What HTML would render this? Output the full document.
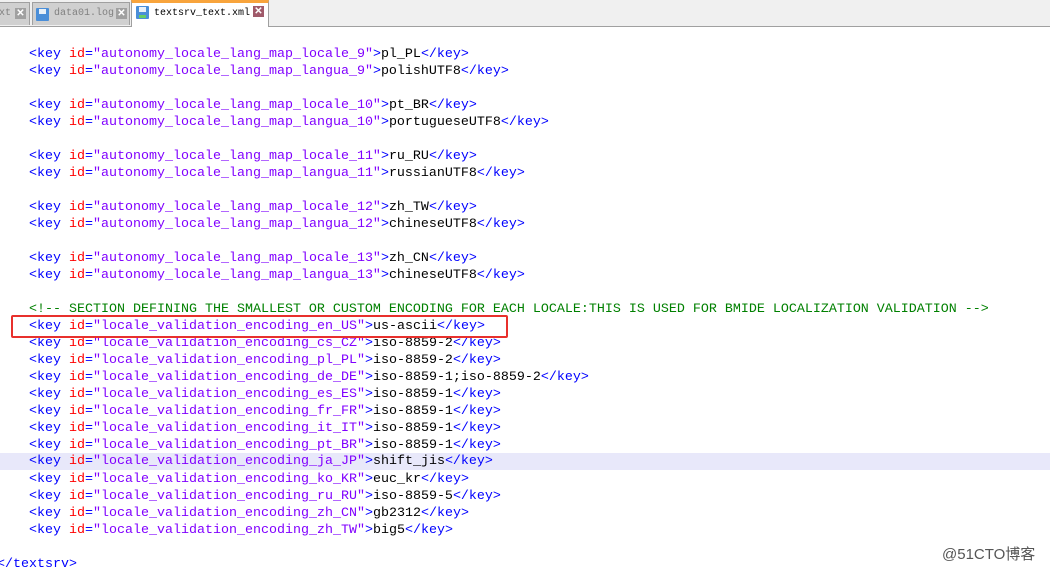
<!DOCTYPE html>
<html><head><meta charset="utf-8"><style>
body{margin:0;width:1050px;height:573px;background:#fff;overflow:hidden;position:relative;font-family:"Liberation Mono","Courier New",monospace;font-size:13.33px}
.tabs{position:absolute;left:0;top:0;width:1050px;height:26px;background:#f0f0f0;border-bottom:1px solid #a0a0a0}
.tab{position:absolute;top:2px;height:23px;background:#d0d0d0;border:1px solid #a0a0a0;border-bottom:none;color:#808080;font-size:10px;line-height:22px;box-sizing:border-box}
.tab.act{top:0;height:27px;background:#fff;color:#000;border-top:3px solid #f8a43c;line-height:22px}
.x{position:absolute;top:5px;width:11px;height:11px;background:#a0a0a0;color:#fff;font:bold 10px/11px "Liberation Sans",sans-serif;text-align:center}
.act .x{background:#a05a6a;top:3px}
.ic{position:absolute;top:5px;width:13px;height:13px;background:#4a8ed8;border-radius:1px}
.ic::after{content:"";position:absolute;left:3px;top:1px;width:7px;height:5px;background:#e8f0f8}
.act .ic{top:3px}
.act .ic::before{content:"";position:absolute;left:3px;bottom:1px;width:7px;height:3px;background:#6c6}
.l{position:absolute;left:29px;height:17px;line-height:17px;white-space:pre;width:1021px}
.t{color:#0000ff}.a{color:#ff0000}.v{color:#8000ff}.c{color:#008000}.k{color:#000}
.hl{background:#e8e8fa;left:0;padding-left:29px}
.box{position:absolute;left:11px;top:315px;width:493px;height:19px;border:2px solid #e8302c;border-radius:2px}
.wm{position:absolute;left:942px;top:543px;font-family:"Liberation Sans","Noto Sans CJK SC",sans-serif;font-size:15px;color:#555}
</style></head><body>
<div class="tabs">
<div class="tab" style="left:-2px;width:32px;padding-left:0"><span style="position:absolute;left:0">xt</span><span class="x" style="left:16px">✕</span></div>
<div class="tab" style="left:32px;width:98px"><span class="ic" style="left:3px"></span><span style="position:absolute;left:21px">data01.log</span><span class="x" style="left:83px">✕</span></div>
<div class="tab act" style="left:131px;width:138px"><span class="ic" style="left:4px"></span><span style="position:absolute;left:22px">textsrv_text.xml</span><span class="x" style="left:121px">✕</span></div>
</div>
<div class="l" style="top:46px"><span class="t">&lt;key </span><span class="a">id</span><span class="t">=</span><span class="v">"autonomy_locale_lang_map_locale_9"</span><span class="t">&gt;</span>pl_PL<span class="t">&lt;/key&gt;</span></div>
<div class="l" style="top:63px"><span class="t">&lt;key </span><span class="a">id</span><span class="t">=</span><span class="v">"autonomy_locale_lang_map_langua_9"</span><span class="t">&gt;</span>polishUTF8<span class="t">&lt;/key&gt;</span></div>
<div class="l" style="top:97px"><span class="t">&lt;key </span><span class="a">id</span><span class="t">=</span><span class="v">"autonomy_locale_lang_map_locale_10"</span><span class="t">&gt;</span>pt_BR<span class="t">&lt;/key&gt;</span></div>
<div class="l" style="top:114px"><span class="t">&lt;key </span><span class="a">id</span><span class="t">=</span><span class="v">"autonomy_locale_lang_map_langua_10"</span><span class="t">&gt;</span>portugueseUTF8<span class="t">&lt;/key&gt;</span></div>
<div class="l" style="top:148px"><span class="t">&lt;key </span><span class="a">id</span><span class="t">=</span><span class="v">"autonomy_locale_lang_map_locale_11"</span><span class="t">&gt;</span>ru_RU<span class="t">&lt;/key&gt;</span></div>
<div class="l" style="top:165px"><span class="t">&lt;key </span><span class="a">id</span><span class="t">=</span><span class="v">"autonomy_locale_lang_map_langua_11"</span><span class="t">&gt;</span>russianUTF8<span class="t">&lt;/key&gt;</span></div>
<div class="l" style="top:199px"><span class="t">&lt;key </span><span class="a">id</span><span class="t">=</span><span class="v">"autonomy_locale_lang_map_locale_12"</span><span class="t">&gt;</span>zh_TW<span class="t">&lt;/key&gt;</span></div>
<div class="l" style="top:216px"><span class="t">&lt;key </span><span class="a">id</span><span class="t">=</span><span class="v">"autonomy_locale_lang_map_langua_12"</span><span class="t">&gt;</span>chineseUTF8<span class="t">&lt;/key&gt;</span></div>
<div class="l" style="top:250px"><span class="t">&lt;key </span><span class="a">id</span><span class="t">=</span><span class="v">"autonomy_locale_lang_map_locale_13"</span><span class="t">&gt;</span>zh_CN<span class="t">&lt;/key&gt;</span></div>
<div class="l" style="top:267px"><span class="t">&lt;key </span><span class="a">id</span><span class="t">=</span><span class="v">"autonomy_locale_lang_map_langua_13"</span><span class="t">&gt;</span>chineseUTF8<span class="t">&lt;/key&gt;</span></div>
<div class="l c" style="top:301px">&lt;!-- SECTION DEFINING THE SMALLEST OR CUSTOM ENCODING FOR EACH LOCALE:THIS IS USED FOR BMIDE LOCALIZATION VALIDATION --&gt;</div>
<div class="l" style="top:318px"><span class="t">&lt;key </span><span class="a">id</span><span class="t">=</span><span class="v">"locale_validation_encoding_en_US"</span><span class="t">&gt;</span>us-ascii<span class="t">&lt;/key&gt;</span></div>
<div class="l" style="top:335px"><span class="t">&lt;key </span><span class="a">id</span><span class="t">=</span><span class="v">"locale_validation_encoding_cs_CZ"</span><span class="t">&gt;</span>iso-8859-2<span class="t">&lt;/key&gt;</span></div>
<div class="l" style="top:352px"><span class="t">&lt;key </span><span class="a">id</span><span class="t">=</span><span class="v">"locale_validation_encoding_pl_PL"</span><span class="t">&gt;</span>iso-8859-2<span class="t">&lt;/key&gt;</span></div>
<div class="l" style="top:369px"><span class="t">&lt;key </span><span class="a">id</span><span class="t">=</span><span class="v">"locale_validation_encoding_de_DE"</span><span class="t">&gt;</span>iso-8859-1;iso-8859-2<span class="t">&lt;/key&gt;</span></div>
<div class="l" style="top:386px"><span class="t">&lt;key </span><span class="a">id</span><span class="t">=</span><span class="v">"locale_validation_encoding_es_ES"</span><span class="t">&gt;</span>iso-8859-1<span class="t">&lt;/key&gt;</span></div>
<div class="l" style="top:403px"><span class="t">&lt;key </span><span class="a">id</span><span class="t">=</span><span class="v">"locale_validation_encoding_fr_FR"</span><span class="t">&gt;</span>iso-8859-1<span class="t">&lt;/key&gt;</span></div>
<div class="l" style="top:420px"><span class="t">&lt;key </span><span class="a">id</span><span class="t">=</span><span class="v">"locale_validation_encoding_it_IT"</span><span class="t">&gt;</span>iso-8859-1<span class="t">&lt;/key&gt;</span></div>
<div class="l" style="top:437px"><span class="t">&lt;key </span><span class="a">id</span><span class="t">=</span><span class="v">"locale_validation_encoding_pt_BR"</span><span class="t">&gt;</span>iso-8859-1<span class="t">&lt;/key&gt;</span></div>
<div class="l hl" style="top:453px;width:1021px;height:17px;line-height:18px"><span class="t">&lt;key </span><span class="a">id</span><span class="t">=</span><span class="v">"locale_validation_encoding_ja_JP"</span><span class="t">&gt;</span>shift_jis<span class="t">&lt;/key&gt;</span></div>
<div class="l" style="top:471px"><span class="t">&lt;key </span><span class="a">id</span><span class="t">=</span><span class="v">"locale_validation_encoding_ko_KR"</span><span class="t">&gt;</span>euc_kr<span class="t">&lt;/key&gt;</span></div>
<div class="l" style="top:488px"><span class="t">&lt;key </span><span class="a">id</span><span class="t">=</span><span class="v">"locale_validation_encoding_ru_RU"</span><span class="t">&gt;</span>iso-8859-5<span class="t">&lt;/key&gt;</span></div>
<div class="l" style="top:505px"><span class="t">&lt;key </span><span class="a">id</span><span class="t">=</span><span class="v">"locale_validation_encoding_zh_CN"</span><span class="t">&gt;</span>gb2312<span class="t">&lt;/key&gt;</span></div>
<div class="l" style="top:522px"><span class="t">&lt;key </span><span class="a">id</span><span class="t">=</span><span class="v">"locale_validation_encoding_zh_TW"</span><span class="t">&gt;</span>big5<span class="t">&lt;/key&gt;</span></div>
<div class="l t" style="top:556px;left:-3px">&lt;/textsrv&gt;</div>
<div class="box"></div>
<div class="wm">@51CTO博客</div>
</body></html>
